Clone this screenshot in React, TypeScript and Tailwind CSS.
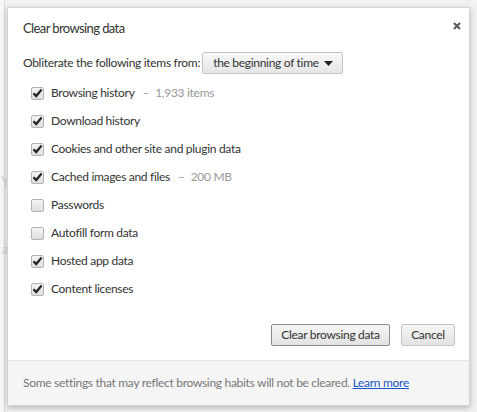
import React, { useState } from "react";

const items = [
  { label: "Browsing history", extra: "1,933 items", checked: true },
  { label: "Download history", checked: true },
  { label: "Cookies and other site and plugin data", checked: true },
  { label: "Cached images and files", extra: "200 MB", checked: true },
  { label: "Passwords", checked: false },
  { label: "Autofill form data", checked: false },
  { label: "Hosted app data", checked: true },
  { label: "Content licenses", checked: true },
];

const Check = ({ on }: { on: boolean }) => (
  <span className="w-[13px] h-[13px] rounded-[2px] border border-[#b3b3b3] bg-gradient-to-b from-[#f5f5f5] to-[#dedede] flex items-center justify-center shrink-0">
    {on && (
      <svg width="11" height="10" viewBox="0 0 11 10">
        <path d="M1.5 5.2 L4.2 8 L9.6 1.5" fill="none" stroke="#222" strokeWidth="2.2" />
      </svg>
    )}
  </span>
);

export default function App() {
  const [checks, setChecks] = useState(items.map((i) => i.checked));

  return (
    <div
      className="w-[477px] h-[412px] bg-[#f2f2f2] relative overflow-hidden whitespace-nowrap text-[12px] tracking-[-0.3px]"
      style={{ fontFamily: 'Lato, "Noto Sans", sans-serif' }}
    >
      {/* page behind the dialog */}
      <div className="absolute left-0 top-0 bottom-0 w-[5px] border-r border-[#dcdcdc] bg-[#f7f7f7]" />
      <div className="absolute left-[1px] top-[172px] text-[13px] text-[#d0d0d0]">Yo</div>
      <div className="absolute left-[2px] top-[240px] text-[13px] text-[#d0d0d0]">a</div>

      <div className="absolute left-[7px] top-[7px] w-[463px] h-[399px] bg-white border border-[#d6d6d6] shadow-[0_2px_6px_rgba(0,0,0,0.25)] flex flex-col">
        <div className="flex items-start justify-between pl-[15px] pr-[8px] pt-[10px]">
          <h1 className="text-[13px] tracking-[-0.6px] text-[#333] leading-[20px]">Clear browsing data</h1>
          <svg width="8" height="8" viewBox="0 0 8 8" className="mt-[4px]">
            <path d="M1 1 L7 7 M7 1 L1 7" stroke="#555" strokeWidth="2" />
          </svg>
        </div>

        <div className="flex items-center pl-[15px] mt-[14px] text-[#333]">
          <span>Obliterate the following items from:</span>
          <div className="ml-[2px] h-[22px] w-[141px] border border-[#c4c4c4] rounded-[2px] bg-gradient-to-b from-[#f8f8f8] to-[#e6e6e6] flex items-center justify-between pl-[10px] pr-[9px]">
            <span>the beginning of time</span>
            <svg width="9" height="5" viewBox="0 0 9 5">
              <path d="M0 0 H9 L4.5 5 Z" fill="#222" />
            </svg>
          </div>
        </div>

        <div className="flex flex-col mt-[5px] pl-[23px]">
          {items.map((it, i) => (
            <label
              key={it.label}
              className="h-[28px] flex items-center gap-[7px] text-[#333] cursor-default"
              onClick={() => setChecks((c) => c.map((v, j) => (j === i ? !v : v)))}
            >
              <Check on={checks[i]} />
              <span>{it.label}</span>
              {it.extra && (
                <span className="text-[#999]">
                  <span className="ml-[1px]">–</span>
                  <span className="ml-[6px]">{it.extra}</span>
                </span>
              )}
            </label>
          ))}
        </div>

        <div className="flex justify-end gap-[11px] pr-[14px] mt-auto mb-[14px] text-[#333]">
          <button className="h-[22px] w-[119px] border border-[#8c8c8c] rounded-[2px] bg-gradient-to-b from-[#f6f6f6] to-[#e2e2e2]">
            Clear browsing data
          </button>
          <button className="h-[22px] w-[54px] border border-[#c4c4c4] rounded-[2px] bg-gradient-to-b from-[#f6f6f6] to-[#e2e2e2]">
            Cancel
          </button>
        </div>

        <div className="h-[45px] bg-[#f5f5f5] border-t border-[#e6e6e6] flex items-center pl-[15px] text-[#777]">
          <span>
            Some settings that may reflect browsing habits will not be cleared.{" "}
            <a className="text-[#1a55c4] underline">Learn more</a>
          </span>
        </div>
      </div>
    </div>
  );
}
